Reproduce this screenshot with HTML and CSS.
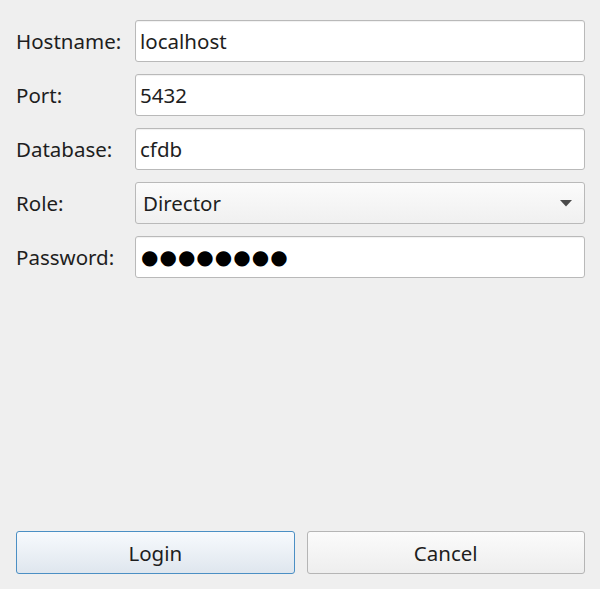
FILE: index.html
```html
<!DOCTYPE html>
<html>
<head>
<meta charset="utf-8">
<link rel="stylesheet" href="styles.css">
</head>
<body>
<div class="dialog">
  <div class="form">
    <label class="label">Hostname:</label>
    <div class="field">localhost</div>
    <label class="label">Port:</label>
    <div class="field">5432</div>
    <label class="label">Database:</label>
    <div class="field">cfdb</div>
    <label class="label">Role:</label>
    <div class="combo"><span>Director</span><svg class="arrow" width="12" height="7" viewBox="0 0 12 7"><path d="M0 0H12L6 6.5Z" fill="#4a4a4a"/></svg></div>
    <label class="label">Password:</label>
    <div class="field password">●●●●●●●●</div>
  </div>
  <div class="buttons">
    <button class="btn primary">Login</button>
    <button class="btn">Cancel</button>
  </div>
</div>
</body>
</html>
```
FILE: styles.css
```css
html, body {
  margin: 0;
  padding: 0;
  background: #efefef;
}
.dialog {
  box-sizing: border-box;
  height: 589px;
  padding: 20px 15px 15px 16px;
  display: flex;
  flex-direction: column;
  justify-content: space-between;
  font-family: "Noto Sans", "Open Sans", sans-serif;
  font-size: 20.5px;
  color: #1e1e1e;
}
.form {
  display: grid;
  grid-template-columns: 119px 1fr;
  row-gap: 12px;
  align-items: center;
}
.label {
  line-height: 42px;
}
.field, .combo {
  box-sizing: border-box;
  height: 42px;
  border: 1px solid #b9b9b9;
  border-radius: 3px;
  background: #fff;
  padding: 0 4px;
  display: flex;
  align-items: center;
  box-shadow: inset 0 1px 1px rgba(0,0,0,0.06);
}
.combo {
  background: linear-gradient(#fbfbfb, #f0f0f0);
  padding: 0 12px 0 7px;
  justify-content: space-between;
  box-shadow: none;
}
.password {
  font-family: "DejaVu Sans", sans-serif;
  font-size: 20px;
  color: #000;
  letter-spacing: 1px;
  padding-left: 5px;
}
.buttons {
  display: flex;
  gap: 12px;
}
.btn {
  flex: 1;
  height: 43px;
  box-sizing: border-box;
  border: 1px solid #b5b5b5;
  border-radius: 3px;
  background: linear-gradient(#fbfbfb, #eeeeee);
  font-family: "Noto Sans", "Open Sans", sans-serif;
  font-size: 20.5px;
  color: #1e1e1e;
  padding: 0;
}
.btn.primary {
  border-color: #4b8fc4;
  background: linear-gradient(#f7fafd, #dfe6ee);
}
```
